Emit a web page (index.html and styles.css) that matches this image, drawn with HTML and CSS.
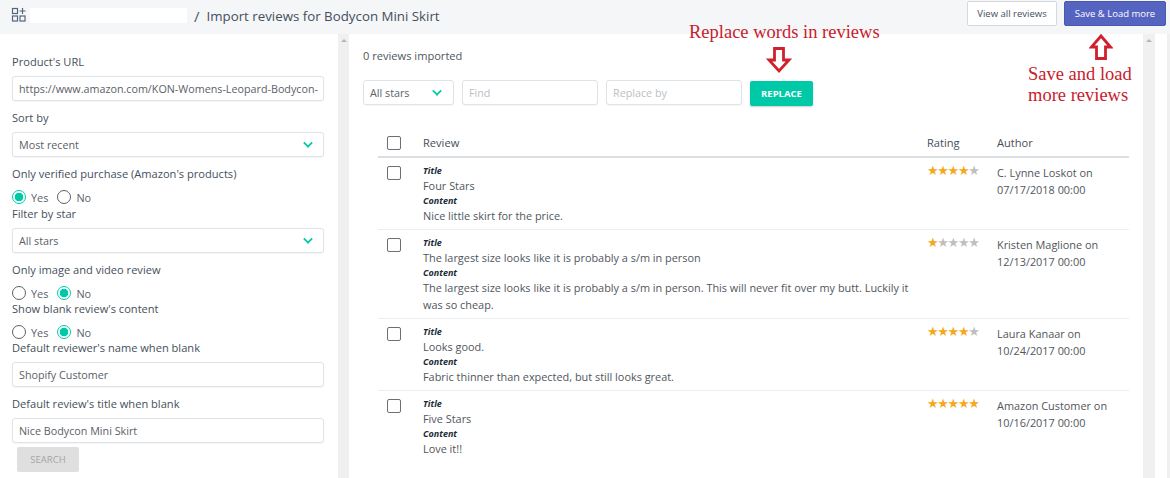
FILE: index.html
```html
<!DOCTYPE html>
<html lang="en">
<head>
    <meta charset="UTF-8">
    <meta name="viewport" content="width=device-width, initial-scale=1.0">
    <title>Import reviews</title>
    <link rel="stylesheet" href="styles.css">
</head>
<body>
    <header class="topbar">
        <svg class="apps-icon" width="16" height="16" viewBox="0 0 16 16" fill="none" stroke="#56657f" stroke-width="1.2">
            <rect x="1.5" y="1.5" width="5" height="5"/>
            <rect x="1.5" y="9" width="5" height="5"/>
            <rect x="9" y="9" width="5" height="5"/>
            <path d="M11.5 1v6M8.5 4h6"/>
        </svg>
        <div class="redacted"></div>
        <span class="slash">/</span>
        <h1>Import reviews for Bodycon Mini Skirt</h1>
        <div class="top-actions">
            <button class="btn-plain">View all reviews</button>
            <button class="btn-primary">Save &amp; Load more</button>
        </div>
    </header>

    <div class="layout">
        <aside class="sidebar">
            <label class="field-label">Product's URL</label>
            <div class="input">https://www.amazon.com/KON-Womens-Leopard-Bodycon-</div>

            <label class="field-label">Sort by</label>
            <div class="input select">Most recent <span class="chevron"></span></div>

            <label class="field-label">Only verified purchase (Amazon's products)</label>
            <div class="radios first">
                <span class="radio on"></span><span>Yes</span>
                <span class="radio"></span><span>No</span>
            </div>

            <label class="field-label">Filter by star</label>
            <div class="input select">All stars <span class="chevron"></span></div>

            <label class="field-label">Only image and video review</label>
            <div class="radios">
                <span class="radio"></span><span>Yes</span>
                <span class="radio on"></span><span>No</span>
            </div>

            <label class="field-label">Show blank review's content</label>
            <div class="radios">
                <span class="radio"></span><span>Yes</span>
                <span class="radio on"></span><span>No</span>
            </div>

            <label class="field-label">Default reviewer's name when blank</label>
            <div class="input">Shopify Customer</div>

            <label class="field-label">Default review's title when blank</label>
            <div class="input">Nice Bodycon Mini Skirt</div>

            <button class="btn-search">SEARCH</button>
        </aside>
        <div class="scrollbar side-scroll"><span class="scroll-up"></span></div>

        <main class="content">
            <p class="imported">0 reviews imported</p>
            <div class="toolbar">
                <div class="input select stars-select">All stars <span class="chevron"></span></div>
                <div class="input placeholder find">Find</div>
                <div class="input placeholder find">Replace by</div>
                <button class="btn-replace">REPLACE</button>
            </div>

            <div class="table">
                <div class="row head">
                    <span class="check"></span>
                    <span>Review</span>
                    <span>Rating</span>
                    <span>Author</span>
                </div>
                <div class="row">
                    <span class="check"></span>
                    <div>
                        <div class="tag">Title</div>
                        <div>Four Stars</div>
                        <div class="tag">Content</div>
                        <div>Nice little skirt for the price.</div>
                    </div>
                    <div class="stars">★★★★<span class="off">★</span></div>
                    <div>C. Lynne Loskot on 07/17/2018 00:00</div>
                </div>
                <div class="row">
                    <span class="check"></span>
                    <div>
                        <div class="tag">Title</div>
                        <div>The largest size looks like it is probably a s/m in person</div>
                        <div class="tag">Content</div>
                        <div>The largest size looks like it is probably a s/m in person. This will never fit over my butt. Luckily it was so cheap.</div>
                    </div>
                    <div class="stars">★<span class="off">★★★★</span></div>
                    <div>Kristen Maglione on 12/13/2017 00:00</div>
                </div>
                <div class="row">
                    <span class="check"></span>
                    <div>
                        <div class="tag">Title</div>
                        <div>Looks good.</div>
                        <div class="tag">Content</div>
                        <div>Fabric thinner than expected, but still looks great.</div>
                    </div>
                    <div class="stars">★★★★<span class="off">★</span></div>
                    <div>Laura Kanaar on 10/24/2017 00:00</div>
                </div>
                <div class="row last">
                    <span class="check"></span>
                    <div>
                        <div class="tag">Title</div>
                        <div>Five Stars</div>
                        <div class="tag">Content</div>
                        <div>Love it!!</div>
                    </div>
                    <div class="stars">★★★★★</div>
                    <div>Amazon Customer on 10/16/2017 00:00</div>
                </div>
            </div>
        </main>
        <div class="scrollbar"><span class="scroll-up"></span></div>
        <div class="page-gap"></div>
        <div class="scrollbar page-scroll"></div>
    </div>

    <!-- red notes drawn on top of the screenshot -->
    <div class="note note-replace">Replace words in reviews</div>
    <svg class="arrow arrow-down" width="26" height="28" viewBox="0 0 26 28" fill="#fff" stroke="#d0202c" stroke-width="2.8">
        <path d="M8.5 2.500h9v11.500h5.500L13 25 3 14h5.500z"/>
    </svg>
    <svg class="arrow arrow-up" width="24" height="28" viewBox="0 0 24 28" fill="#fff" stroke="#d0202c" stroke-width="2.8">
        <path d="M7.500 25.500h9V14h5L12 3 2.500 14h5z"/>
    </svg>
    <div class="note note-save">Save and load<br>more reviews</div>
</body>
</html>
```

FILE: styles.css
```css
html, body {
    height: 100%;
}
body {
    margin: 0;
    height: 478px;
    overflow: hidden;
    background-color: #fff;
    font-family: "Open Sans", Arial, sans-serif;
    font-size: 10.9px;
    color: #50565c;
    position: relative;
}
.topbar {
    height: 34px;
    box-sizing: border-box;
    padding: 0 4px 0 11px;
    display: flex;
    align-items: center;
    background-color: #f4f6f8;
}
.apps-icon {
    flex: none;
    margin-top: -5px;
}
.redacted {
    width: 157px;
    height: 15px;
    margin: 0 0 3px 3px;
    background-color: #fff;
}
.slash {
    margin: 0 7px 3px 7px;
    font-size: 15px;
    color: #50565c;
}
h1 {
    margin: 0 0 3px 0;
    font-size: 13.3px;
    font-weight: 400;
    color: #454f5b;
}
.top-actions {
    margin-left: auto;
    margin-top: -8px;
    display: flex;
    gap: 7px;
}
button {
    font-family: inherit;
    font-size: 9.5px;
    border-radius: 2px;
    height: 25px;
    padding: 0;
}
.btn-plain {
    width: 90px;
    background-color: #fff;
    border: 1px solid #d5d9dd;
    color: #454f5b;
}
.btn-primary {
    width: 102px;
    background-color: #5563c1;
    border: 1px solid #4a58b0;
    color: #fff;
}
.layout {
    display: flex;
    height: 444px;
    padding-left: 2px;
    background-color: #fff;
}
.sidebar {
    width: 336px;
    box-sizing: border-box;
    padding: 21px 14px 0 10px;
    flex: none;
}
.field-label {
    display: block;
    height: 14px;
    line-height: 14px;
    margin: 0 0 7px 0;
    font-size: 11.1px;
    font-weight: 500;
    color: #454f5b;
}
.input {
    height: 25px;
    box-sizing: border-box;
    border: 1px solid #dfe3e8;
    border-radius: 3px;
    padding: 0 6px;
    line-height: 25px;
    margin-bottom: 10px;
    font-size: 10.75px;
    white-space: nowrap;
    overflow: hidden;
    color: #5a6168;
    background-color: #fff;
    box-shadow: 0 1px 1px rgba(0, 0, 0, 0.04);
}
.select {
    position: relative;
}
.chevron {
    position: absolute;
    right: 11px;
    top: 6px;
    width: 6px;
    height: 6px;
    border-right: 2px solid #00c9a7;
    border-bottom: 2px solid #00c9a7;
    transform: rotate(45deg) scale(0.85);
}
.radios {
    display: flex;
    align-items: center;
    height: 16px;
    margin: 8px 0 1px 0;
    color: #5a6168;
}
.radios.first {
    margin-bottom: 2px;
}
.radio {
    width: 12px;
    height: 12px;
    border: 1px solid #5a6168;
    border-radius: 50%;
    margin-right: 5px;
    box-sizing: content-box;
}
.radios span:nth-child(3) {
    margin-left: 9px;
}
.radio.on {
    border-color: #00c9a7;
    background: radial-gradient(circle, #00c9a7 0 4px, #fff 4.6px);
}
.btn-search {
    display: block;
    margin: -6px 0 0 5px;
    width: 62px;
    height: 25px;
    border: none;
    background-color: #dfdfdf;
    color: #a5a5a5;
}
.scrollbar {
    flex: none;
    width: 12px;
    background-color: #f0f0f0;
    position: relative;
}
.side-scroll {
    width: 11px;
}
.scroll-up {
    position: absolute;
    left: 3px;
    top: 5px;
    border-left: 3px solid transparent;
    border-right: 3px solid transparent;
    border-bottom: 3px solid #b5b5b5;
}
.content {
    width: 794px;
    box-sizing: border-box;
    padding: 15px 14px 0 14px;
    flex: none;
}
.imported {
    margin: 0 0 17px 0;
    height: 14px;
    line-height: 14px;
    font-size: 11.1px;
    font-weight: 500;
    color: #50565c;
}
.toolbar {
    display: flex;
    gap: 8px;
}
.toolbar .input {
    margin-bottom: 0;
}
.stars-select {
    width: 91px;
}
.stars-select .chevron {
    right: 12px;
}
.find {
    width: 136px;
}
.placeholder {
    color: #bcc0c4;
}
.btn-replace {
    width: 63px;
    height: 25px;
    margin-top: 1px;
    border: none;
    background-color: #00c9a7;
    color: #fff;
    font-weight: 700;
    box-shadow: 0 1px 2px rgba(0, 0, 0, 0.2);
}
.table {
    margin: 24px 0 0 15px;
    width: 751px;
}
.row {
    display: grid;
    grid-template-columns: 45px 504px 70px 132px;
    box-sizing: border-box;
    padding: 6px 0 5px 0;
    border-bottom: 1px solid #eceeef;
    line-height: 17px;
}
.row > div:last-child {
    padding-right: 10px;
}
.row > div:nth-child(2) {
    padding-right: 12px;
}
.row.head {
    height: 28px;
    border-bottom: 2px solid #dcdfe2;
    padding-top: 4px;
    font-weight: 500;
    font-size: 11.1px;
    color: #454f5b;
}
.row.last {
    border-bottom: none;
}
.check {
    width: 12px;
    height: 12px;
    border: 1px solid #6b6f73;
    border-radius: 2px;
    margin: 2px 0 0 9px;
    background-color: #fff;
}
.tag {
    font-size: 9px;
    line-height: 13px;
    font-weight: 700;
    font-style: italic;
    color: #212b36;
}
.stars {
    font-family: "DejaVu Sans", sans-serif;
    font-size: 13px;
    letter-spacing: -1.35px;
    line-height: 14px;
    color: #f5a81c;
    white-space: nowrap;
}
.stars .off {
    color: #bfbfbf;
}
.page-gap {
    flex: 1;
}
.page-scroll {
    width: 3px;
}
.note {
    position: absolute;
    font-family: "Liberation Serif", serif;
    font-size: 18.5px;
    color: #c8202c;
    line-height: 21px;
}
.note-replace {
    left: 689px;
    top: 22px;
    white-space: nowrap;
}
.note-save {
    left: 1028px;
    top: 64px;
    text-align: left;
    white-space: nowrap;
}
.arrow {
    position: absolute;
}
.arrow-down {
    left: 766px;
    top: 46px;
}
.arrow-up {
    left: 1089px;
    top: 33px;
}
```
